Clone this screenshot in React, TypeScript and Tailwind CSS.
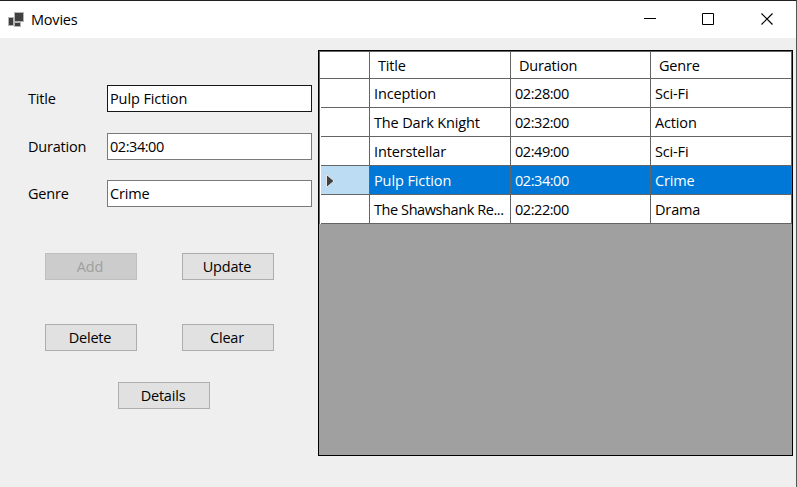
import React from "react";

const movies = [
  { title: "Inception", duration: "02:28:00", genre: "Sci-Fi" },
  { title: "The Dark Knight", duration: "02:32:00", genre: "Action" },
  { title: "Interstellar", duration: "02:49:00", genre: "Sci-Fi" },
  { title: "Pulp Fiction", duration: "02:34:00", genre: "Crime" },
  { title: "The Shawshank Re...", duration: "02:22:00", genre: "Drama" },
];
const selected = 3;

function spacing(text: string) {
  if (/^\d/.test(text)) return "tracking-[-0.45px]";
  if (text.endsWith("...")) return "tracking-[-0.42px]";
  if (text === "Pulp Fiction") return "tracking-[-0.1px]";
  return "tracking-[-0.15px]";
}

function TitleBar() {
  return (
    <header className="flex h-[37px] shrink-0 items-center bg-white">
      <svg className="ml-2 h-4 w-4 shrink-0" viewBox="0 0 16 16" shapeRendering="crispEdges">
        <path d="M6 0h10v10H6zM0 5h6v9H0zM6 10h7v5H6z" fill="#b4b4b4" />
        <path d="M7 1h8v8H7zM1 6h4v7H1zM7 11h5v3H7z" fill="#404040" />
      </svg>
      <h1 className="ml-[7px] grow">Movies</h1>
      <svg className="mr-5 h-[37px] w-[136px] shrink-0" viewBox="0 0 136 37" fill="none" stroke="#000">
        <path d="M4 17.5h12" />
        <path d="M62.5 12.5h11v11h-11z" />
        <path d="M121.5 12.5l11 11M132.5 12.5l-11 11" strokeWidth="1.2" />
      </svg>
    </header>
  );
}

function Field({ label, value, focused }: { label: string; value: string; focused?: boolean }) {
  return (
    <div className="flex h-[27px] items-center">
      <label className="w-[79px]">{label}</label>
      <div
        className={`flex h-[27px] w-[205px] items-center border bg-white pl-0.5 ${spacing(value)} ${
          focused ? "border-[#171717]" : "border-[#7a7a7a]"
        }`}
      >
        {value}
      </div>
    </div>
  );
}

function Button({ label, disabled }: { label: string; disabled?: boolean }) {
  return (
    <button
      disabled={disabled}
      className={`flex h-[27px] w-[92px] items-center justify-center border pr-0.5 ${
        disabled ? "border-[#bfbfbf] bg-[#cccccc] text-[#a0a0a0]" : "border-[#adadad] bg-[#e1e1e1]"
      }`}
    >
      {label}
    </button>
  );
}

function MovieGrid() {
  return (
    <section className="mt-3 h-[406px] w-[475px] shrink-0 border border-black bg-[#a0a0a0]">
      <div className="border-l border-t border-[#646464]">
        <div className="grid h-[27px] grid-cols-[50px_141px_140px_141px] bg-white">
          {["", "Title", "Duration", "Genre"].map((h) => (
            <div key={h} className="flex items-center border-b border-r border-[#646464] pl-2 pt-0.5">
              {h}
            </div>
          ))}
        </div>
        {movies.map((m, i) => (
          <div
            key={m.title}
            className={`grid h-[29px] grid-cols-[50px_141px_140px_141px] ${
              i === selected ? "bg-[#0078d7] text-white" : "bg-white"
            }`}
          >
            <div className="flex border-r border-[#646464] bg-white pl-px">
              <div
                className={`flex grow items-center border-b border-[#646464] pl-1 pt-0.5 ${
                  i === selected ? "bg-[#bcdcf4]" : ""
                }`}
              >
                {i === selected && (
                  <svg className="h-[14px] w-[10px]" viewBox="0 0 10 14">
                    <path d="M1.5 0.5v13l7.5-6.5z" fill="#404040" stroke="#e6e6e6" />
                  </svg>
                )}
              </div>
            </div>
            {[m.title, m.duration, m.genre].map((t) => (
              <div
                key={t}
                className={`flex items-center whitespace-nowrap border-b border-r border-[#646464] pl-1 pt-0.5 ${spacing(t)}`}
              >
                {t}
              </div>
            ))}
          </div>
        ))}
      </div>
    </section>
  );
}

export default function App() {
  return (
    <div className="flex h-[487px] w-[797px] flex-col overflow-hidden border-r border-t border-r-[#555] border-t-[#202020] bg-[#efefef] font-['Open_Sans',sans-serif] text-[14.5px] leading-5 tracking-[-0.2px] text-black">
      <TitleBar />
      <main className="flex grow">
        <div className="w-[318px] shrink-0">
          <div className="flex flex-col pl-7 pt-[47px]">
            <Field label="Title" value="Pulp Fiction" focused />
            <div className="mt-[21px]">
              <Field label="Duration" value="02:34:00" />
            </div>
            <div className="mt-5">
              <Field label="Genre" value="Crime" />
            </div>
          </div>
          <div className="mt-[46px] grid grid-cols-[92px_92px] gap-x-[45px] gap-y-11 pl-[45px]">
            <Button label="Add" disabled />
            <Button label="Update" />
            <Button label="Delete" />
            <Button label="Clear" />
          </div>
          <div className="mt-[31px] pl-[118px]">
            <Button label="Details" />
          </div>
        </div>
        <MovieGrid />
      </main>
    </div>
  );
}
